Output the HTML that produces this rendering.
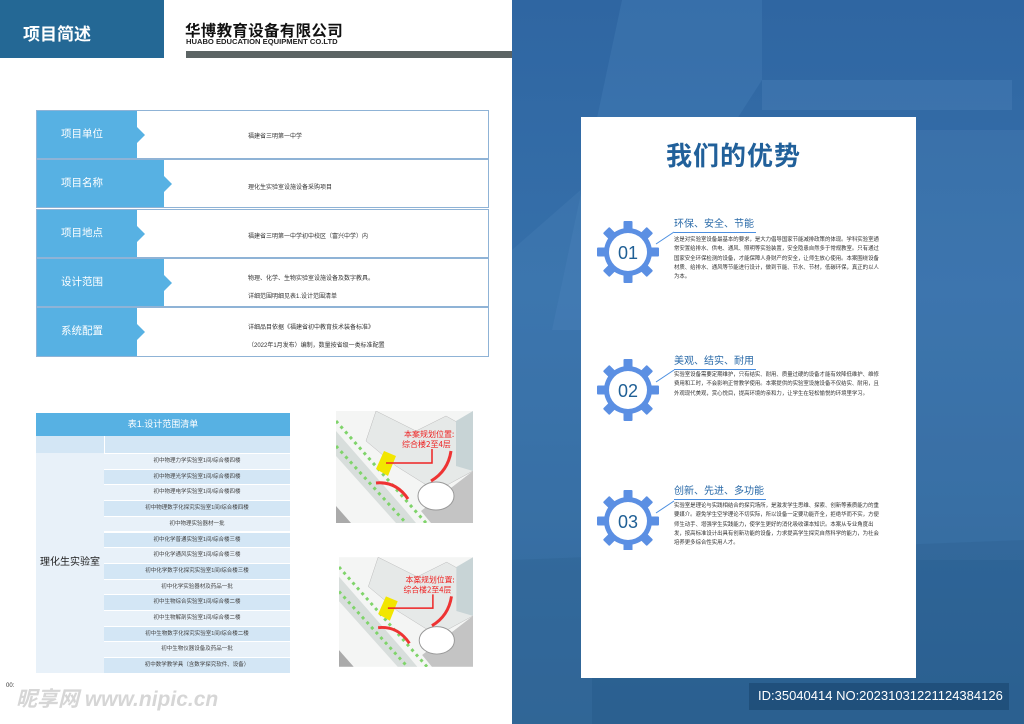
<!DOCTYPE html>
<html><head><meta charset="utf-8"><style>
*{margin:0;padding:0;box-sizing:border-box}
body{width:1024px;height:724px;position:relative;overflow:hidden;background:#fff;font-family:"Liberation Sans","Noto Sans CJK SC",sans-serif}
.abs{position:absolute}
.row{position:absolute;left:36px;width:453px;height:49px;border:1.5px solid #8fb3d6;background:#fff}
.lab{position:absolute;left:0;top:0;height:100%;background:#57b1e3;color:#fff;font-size:10.5px;line-height:47px;padding-left:24px}
.lab:after{content:"";position:absolute;right:-8px;top:16px;border-left:8px solid #57b1e3;border-top:8px solid transparent;border-bottom:8px solid transparent}
.val{position:absolute;left:211px;font-size:6px;color:#333}
.t2{position:absolute;left:104px;width:186px;height:15.7px;font-size:5.5px;color:#444;text-align:center;line-height:15.7px;border-top:1px solid #fff}
.gt{position:absolute;left:674px;font-size:10px;color:#2a6aa8;border-bottom:1px solid #4a8ee0;width:82px;padding-bottom:2px}
.gp{position:absolute;left:674px;width:210px;font-size:5.4px;line-height:9.3px;color:#333}
</style></head><body>
<div class="abs" style="left:0;top:0;width:164px;height:58px;background:#246895"></div>
<div class="abs" style="left:23px;top:20px;font-size:17px;font-weight:bold;color:#fff">项目简述</div>
<div class="abs" style="left:185px;top:19px;font-size:15.5px;font-weight:bold;color:#111;letter-spacing:0.3px">华博教育设备有限公司</div>
<div class="abs" style="left:186px;top:37px;font-size:7.6px;font-weight:bold;color:#222">HUABO EDUCATION EQUIPMENT CO.LTD</div>
<div class="abs" style="left:186px;top:51px;width:326px;height:7px;background:#5c6464"></div>

<div class="row" style="top:110px"><div class="lab" style="width:100px">项目单位</div><div class="val" style="top:20px">福建省三明第一中学</div></div>
<div class="row" style="top:159px"><div class="lab" style="width:127px">项目名称</div><div class="val" style="top:22px">理化生实验室设施设备采购项目</div></div>
<div class="row" style="top:209px"><div class="lab" style="width:100px">项目地点</div><div class="val" style="top:21px">福建省三明第一中学初中校区（富兴中学）内</div></div>
<div class="row" style="top:258px"><div class="lab" style="width:127px">设计范围</div><div class="val" style="top:14px">物理、化学、生物实验室设施设备及数字教具。</div><div class="val" style="top:32px">详细范围明细见表1.设计范围清单</div></div>
<div class="row" style="top:307px;height:50px"><div class="lab" style="width:100px">系统配置</div><div class="val" style="top:14px">详细品目依据《福建省初中教育技术装备标准》</div><div class="val" style="top:32px">（2022年1月发布）编制，数量按省级一类标准配置</div></div>

<div class="abs" style="left:36px;top:413px;width:254px;height:23px;background:#57b1e3;color:#fff;font-size:9px;text-align:center;line-height:23px">表1.设计范围清单</div>
<div class="abs" style="left:36px;top:436px;width:68px;height:17px;background:#d3e6f5"></div>
<div class="abs" style="left:105px;top:436px;width:185px;height:17px;background:#d3e6f5"></div>
<div class="abs" style="left:36px;top:453px;width:68px;height:220px;background:#e8f1f9;font-size:10px;color:#222;line-height:220px;text-align:center">理化生实验室</div>
<div class="t2" style="top:453px;background:#e8f1f9">初中物理力学实验室1间/综合楼四楼</div>
<div class="t2" style="top:468.7px;background:#d3e6f5">初中物理光学实验室1间/综合楼四楼</div>
<div class="t2" style="top:484.4px;background:#e8f1f9">初中物理电学实验室1间/综合楼四楼</div>
<div class="t2" style="top:500.1px;background:#d3e6f5">初中物理数字化探究实验室1间/综合楼四楼</div>
<div class="t2" style="top:515.8px;background:#e8f1f9">初中物理实验器材一批</div>
<div class="t2" style="top:531.5px;background:#d3e6f5">初中化学普通实验室1间/综合楼三楼</div>
<div class="t2" style="top:547.2px;background:#e8f1f9">初中化学通风实验室1间/综合楼三楼</div>
<div class="t2" style="top:562.9px;background:#d3e6f5">初中化学数字化探究实验室1间/综合楼三楼</div>
<div class="t2" style="top:578.6px;background:#e8f1f9">初中化学实验器材及药品一批</div>
<div class="t2" style="top:594.3px;background:#d3e6f5">初中生物综合实验室1间/综合楼二楼</div>
<div class="t2" style="top:610px;background:#e8f1f9">初中生物解剖实验室1间/综合楼二楼</div>
<div class="t2" style="top:625.7px;background:#d3e6f5">初中生物数字化探究实验室1间/综合楼二楼</div>
<div class="t2" style="top:641.4px;background:#e8f1f9">初中生物仪器设备及药品一批</div>
<div class="t2" style="top:657.1px;background:#d3e6f5">初中数学教学具（含数学探究软件、设备）</div>

<svg class="abs" style="left:336px;top:411px" width="137" height="112" viewBox="0 0 137 112">
<rect width="137" height="112" fill="#f4f5f4"/>
<path d="M0 20 L70 100 L80 112 L60 112 L0 45Z" fill="#d8dedc"/>
<path d="M0 10 L90 112" stroke="#7fd46a" stroke-width="3" stroke-dasharray="3 4"/>
<path d="M0 35 L70 112" stroke="#7fd46a" stroke-width="3" stroke-dasharray="3 4"/>
<path d="M40 0 L80 20 L110 5 L137 20 L137 60 L100 80 L60 55 L30 30Z" fill="#e6e9e8" stroke="#bbb" stroke-width=".5"/>
<path d="M120 10 L137 0 L137 60 L120 55Z" fill="#c8d4d6"/>
<path d="M85 100 L137 60 L137 112 L95 112Z" fill="#c4c4c4"/>
<ellipse cx="100" cy="85" rx="18" ry="14" fill="#fff" stroke="#999"/>
<path d="M48 40 L60 45 L52 65 L40 58Z" fill="#f2e600"/>
<path d="M50 52 L96 52 L96 38" stroke="#e22" stroke-width="1.5" fill="none"/>
<path d="M40 72 Q60 70 72 88" stroke="#e33" stroke-width="3" fill="none"/>
<path d="M115 40 Q112 60 95 70" stroke="#e33" stroke-width="3" fill="none"/>
<path d="M0 95 L15 112 L0 112Z" fill="#aaa"/>
<text x="68" y="26" font-size="8" fill="#e22" font-family="Noto Sans CJK SC,sans-serif">本案规划位置:</text>
<text x="66" y="36" font-size="8" fill="#e22" font-family="Noto Sans CJK SC,sans-serif">综合楼2至4层</text>
</svg>
<svg class="abs" style="left:339px;top:557px" width="134" height="110" viewBox="0 0 137 112">
<rect width="137" height="112" fill="#f4f5f4"/>
<path d="M0 20 L70 100 L80 112 L60 112 L0 45Z" fill="#d8dedc"/>
<path d="M0 10 L90 112" stroke="#7fd46a" stroke-width="3" stroke-dasharray="3 4"/>
<path d="M0 35 L70 112" stroke="#7fd46a" stroke-width="3" stroke-dasharray="3 4"/>
<path d="M40 0 L80 20 L110 5 L137 20 L137 60 L100 80 L60 55 L30 30Z" fill="#e6e9e8" stroke="#bbb" stroke-width=".5"/>
<path d="M120 10 L137 0 L137 60 L120 55Z" fill="#c8d4d6"/>
<path d="M85 100 L137 60 L137 112 L95 112Z" fill="#c4c4c4"/>
<ellipse cx="100" cy="85" rx="18" ry="14" fill="#fff" stroke="#999"/>
<path d="M48 40 L60 45 L52 65 L40 58Z" fill="#f2e600"/>
<path d="M50 52 L96 52 L96 38" stroke="#e22" stroke-width="1.5" fill="none"/>
<path d="M40 72 Q60 70 72 88" stroke="#e33" stroke-width="3" fill="none"/>
<path d="M115 40 Q112 60 95 70" stroke="#e33" stroke-width="3" fill="none"/>
<path d="M0 95 L15 112 L0 112Z" fill="#aaa"/>
<text x="68" y="26" font-size="8" fill="#e22" font-family="Noto Sans CJK SC,sans-serif">本案规划位置:</text>
<text x="66" y="36" font-size="8" fill="#e22" font-family="Noto Sans CJK SC,sans-serif">综合楼2至4层</text>
</svg>
<div class="abs" style="left:6px;top:683px;font-size:6px;color:#333">00:</div>
<div class="abs" style="left:16px;top:683px;font-size:21px;font-style:italic;font-weight:bold;color:rgba(200,200,200,0.75)">昵享网 www.nipic.cn</div>

<div class="abs" style="left:512px;top:0;width:512px;height:724px;background:linear-gradient(180deg,#2f66a2 0%,#3670aa 40%,#30689e 70%,#2a5f8f 100%)"></div>
<svg class="abs" style="left:512px;top:0" width="512" height="724">
<path d="M110 0 L250 0 L250 80 L90 330 L40 330Z" fill="#4b84bd" opacity=".3"/>
<path d="M250 80 L500 80 L500 110 L250 110Z" fill="#5a8fc4" opacity=".25"/>
<path d="M0 250 L80 180 L80 724 L0 724Z" fill="#4f86bb" opacity=".25"/>
<path d="M404 130 L512 130 L512 560 L404 560Z" fill="#5a8cc0" opacity=".2"/>
<path d="M0 560 L512 540 L512 724 L0 724Z" fill="#2c6190" opacity=".4"/>
</svg>
<div class="abs" style="left:581px;top:117px;width:335px;height:561px;background:#fff"></div>
<div class="abs" style="left:666px;top:136px;font-size:26px;color:#21609a;letter-spacing:1px;font-weight:bold">我们的优势</div>

<svg class="abs" style="left:596px;top:220px" width="90" height="330">
<defs><g id="g"><circle r="24" fill="#5b8fe3"/><g fill="#5b8fe3">
<rect x="-4.5" y="-31" width="9" height="10" rx="1"/>
<rect x="-4.5" y="-31" width="9" height="10" rx="1" transform="rotate(45)"/><rect x="-4.5" y="-31" width="9" height="10" rx="1" transform="rotate(90)"/><rect x="-4.5" y="-31" width="9" height="10" rx="1" transform="rotate(135)"/><rect x="-4.5" y="-31" width="9" height="10" rx="1" transform="rotate(180)"/><rect x="-4.5" y="-31" width="9" height="10" rx="1" transform="rotate(225)"/><rect x="-4.5" y="-31" width="9" height="10" rx="1" transform="rotate(270)"/><rect x="-4.5" y="-31" width="9" height="10" rx="1" transform="rotate(315)"/></g>
<circle r="19" fill="#fff"/></g></defs>
<use href="#g" x="32" y="32"/><use href="#g" x="32" y="170"/><use href="#g" x="32" y="301"/>
<text x="32" y="39" font-size="18" fill="#1f5f95" text-anchor="middle" font-family="Liberation Sans">01</text>
<text x="32" y="177" font-size="18" fill="#1f5f95" text-anchor="middle" font-family="Liberation Sans">02</text>
<text x="32" y="308" font-size="18" fill="#1f5f95" text-anchor="middle" font-family="Liberation Sans">03</text>
<path d="M60 24 L78 12 M60 162 L78 150 M60 293 L78 281" stroke="#4a8ee0" stroke-width="1"/>
</svg>
<div class="gt" style="top:215px">环保、安全、节能</div>
<div class="gp" style="top:236px">这是对实验室设备最基本的要求，是大力倡导国家节能减排政策的体现。学科实验室通常安置给排水、供电、通风、照明等实验装置，安全隐患自然多于常规教室。只有通过国家安全环保检测的设备，才能保障人身财产的安全，让师生放心使用。本案围绕设备材质、给排水、通风等节能进行设计，做到节能、节水、节材，低碳环保，真正的以人为本。</div>
<div class="gt" style="top:352px">美观、结实、耐用</div>
<div class="gp" style="top:371px">实验室设备需要定期维护，只有结实、耐用、质量过硬的设备才能有效降低维护、维修费用和工时，不会影响正常教学使用。本案提供的实验室设施设备不仅结实、耐用，且外观现代美观，赏心悦目，提高环境的亲和力，让学生在轻松愉悦的环境里学习。</div>
<div class="gt" style="top:482px;width:92px">创新、先进、多功能</div>
<div class="gp" style="top:502px">实验室是理论与实践相结合的探究场所，是激发学生思维、探索、创新等素质能力的重要媒介。避免学生空学理论不切实际，所以设备一定要功能齐全，拒绝华而不实，方便师生动手、增强学生实践能力，使学生更好的消化吸收课本知识。本案从专业角度出发，按高标准设计出具有创新功能的设备，力求提高学生探究自然科学的能力，为社会培养更多综合性实用人才。</div>

<div class="abs" style="left:749px;top:683px;width:260px;height:27px;background:#1f4e78;opacity:.85"></div>
<div class="abs" style="left:758px;top:688px;font-size:13px;color:#fff;font-family:'Liberation Sans'">ID:35040414 NO:20231031221124384126</div>
</body></html>
